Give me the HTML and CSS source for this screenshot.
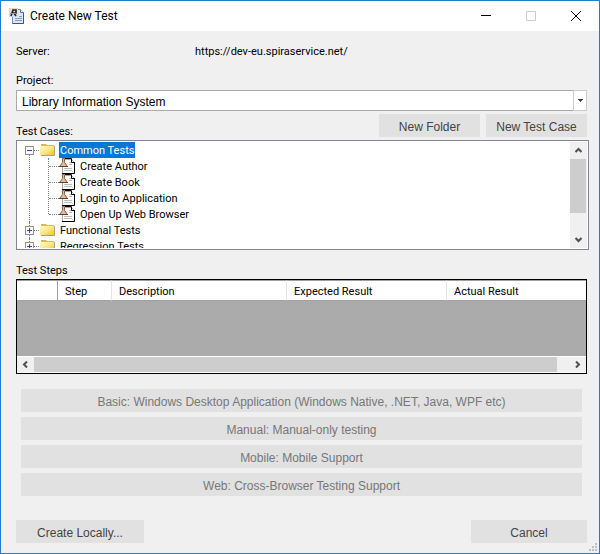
FILE: index.html
```html
<!DOCTYPE html>
<html lang="en">
<head>
<meta charset="utf-8">
<title>Create New Test</title>
<link rel="stylesheet" href="styles.css">
</head>
<body>
<svg class="defs" aria-hidden="true">
  <defs>
    <linearGradient id="gold" x1="0" y1="0" x2="1" y2="1">
      <stop offset="0" stop-color="#fffbd0"/><stop offset=".5" stop-color="#fde88a"/><stop offset="1" stop-color="#eec234"/>
    </linearGradient>
    <symbol id="folder" viewBox="0 0 16 14">
      <path d="M1 1h5l1 1h7v2H1z" fill="#d9b95c"/>
      <path d="M0 3h14v9H0z" fill="url(#gold)"/>
      <path d="M14.500 3v9.500H1" fill="none" stroke="#a8a08a"/>
    </symbol>
    <symbol id="testcase" viewBox="0 0 17 16">
      <path d="M3.500 1.500h9l3 3v11h-12z" fill="#fff" stroke="#aaa"/>
      <path d="M6 .5h6.500v4h3.500M15.500 4v11.500H3" fill="none" stroke="#000"/>
      <path d="M10 4.500h2M10 6.500h3M5 10.500h8M5 12.500h8" stroke="#bbb"/>
      <path d="M3.500.5v4L.5 8.500h8l-3-4v-4z" fill="#f0b890" stroke="#84604f"/>
      <path d="M0 8.500h9" stroke="#5a4038"/>
    </symbol>
  </defs>
</svg>
<div class="window">
  <header class="titlebar">
    <svg class="app-icon" viewBox="0 0 16 16" aria-hidden="true">
      <path d="M3.500 1.500h8l3 3v11h-11z" fill="#dbe6fa" stroke="#6f8abc"/>
      <path d="M14.500 4.500v11h-11" fill="none" stroke="#3d5484"/>
      <path d="M11.500 1.500v3h3" fill="#fff" stroke="#5572a8"/>
      <path d="M6 10.500h7M6 12.500h7M10 8.500h3" stroke="#7f9bd0"/>
      <path d="M0 0h9v9H0z" fill="#dcdcdc"/>
      <path d="M2 8l2-6h3v3H3M5 5l2 3" fill="none" stroke="#222" stroke-width="1.600"/>
      <path d="M1 5.500h6" stroke="#f07820"/>
    </svg>
    <h1>Create New Test</h1>
    <div class="window-buttons">
      <button aria-label="Minimize"><svg viewBox="0 0 10 10"><path d="M0 4.500h10" stroke="#000"/></svg></button>
      <button aria-label="Maximize" disabled><svg viewBox="0 0 10 10"><path d="M.5.5h9v9h-9z" stroke="#ccc"/></svg></button>
      <button aria-label="Close"><svg viewBox="0 0 10 10"><path d="M0 0l10 10M10 0L0 10" stroke="#000"/></svg></button>
    </div>
  </header>
  <main>
    <div class="server"><span>Server:</span><span>https://dev-eu.spiraservice.net/</span></div>
    <label class="project-label" for="project">Project:</label>
    <div class="combo">
      <select id="project"><option>Library Information System</option></select>
      <span class="combo-arrow"><svg viewBox="0 0 5 3"><path d="M0 0h5v1H4v1H3v1H2V2H1V1H0z"/></svg></span>
    </div>
    <div class="cases-head">
      <h2>Test Cases:</h2>
      <button class="btn">New Folder</button>
      <button class="btn">New Test Case</button>
    </div>
    <div class="tree">
      <ul class="tree-list">
        <li class="branch open">
          <div class="row"><button class="toggle" aria-label="Collapse"><svg viewBox="0 0 9 9"><path d="M2 4.500h5"/></svg></button><svg class="folder"><use href="#folder"/></svg><span class="name selected">Common Tests</span></div>
          <ul class="leaves">
            <li class="row"><svg class="case"><use href="#testcase"/></svg><span class="name">Create Author</span></li>
            <li class="row"><svg class="case"><use href="#testcase"/></svg><span class="name">Create Book</span></li>
            <li class="row"><svg class="case"><use href="#testcase"/></svg><span class="name">Login to Application</span></li>
            <li class="row"><svg class="case"><use href="#testcase"/></svg><span class="name">Open Up Web Browser</span></li>
          </ul>
        </li>
        <li class="branch"><div class="row"><button class="toggle" aria-label="Expand"><svg viewBox="0 0 9 9"><path d="M2 4.500h5M4.500 2v5"/></svg></button><svg class="folder"><use href="#folder"/></svg><span class="name">Functional Tests</span></div></li>
        <li class="branch"><div class="row"><button class="toggle" aria-label="Expand"><svg viewBox="0 0 9 9"><path d="M2 4.500h5M4.500 2v5"/></svg></button><svg class="folder"><use href="#folder"/></svg><span class="name">Regression Tests</span></div></li>
      </ul>
      <div class="vscroll">
        <button aria-label="Scroll up"><svg viewBox="0 0 7 7"><path d="M.5 5l3-3 3 3"/></svg></button>
        <div class="thumb"></div>
        <button aria-label="Scroll down"><svg viewBox="0 0 7 7"><path d="M.5 2l3 3 3-3"/></svg></button>
      </div>
    </div>
    <h2 class="steps-label">Test Steps</h2>
    <div class="grid">
      <table>
        <thead><tr><th class="c-mark"></th><th class="c-step">Step</th><th class="c-desc">Description</th><th class="c-exp">Expected Result</th><th>Actual Result</th></tr></thead>
      </table>
      <div class="hscroll">
        <button aria-label="Scroll left"><svg viewBox="0 0 7 7"><path d="M5 .5l-3 3 3 3"/></svg></button>
        <div class="thumb"></div>
        <button aria-label="Scroll right"><svg viewBox="0 0 7 7"><path d="M2 .5l3 3-3 3"/></svg></button>
      </div>
    </div>
    <div class="kinds">
      <button class="btn" disabled>Basic: Windows Desktop Application (Windows Native, .NET, Java, WPF etc)</button>
      <button class="btn" disabled>Manual: Manual-only testing</button>
      <button class="btn" disabled>Mobile: Mobile Support</button>
      <button class="btn" disabled>Web: Cross-Browser Testing Support</button>
    </div>
    <footer>
      <button class="btn create">Create Locally...</button>
      <button class="btn cancel">Cancel</button>
    </footer>
  </main>
  <svg class="grip" viewBox="0 0 8 8" aria-hidden="true"><path d="M6 0h2v2H6zM3 3h2v2H3zM6 3h2v2H6zM0 6h2v2H0zM3 6h2v2H3zM6 6h2v2H6z"/></svg>
</div>
</body>
</html>
```
FILE: styles.css
```css
* { box-sizing: border-box; }
body { margin: 0; font: 11px/16px Roboto, "Liberation Sans", sans-serif; color: #000; }
h1, h2, ul { margin: 0; padding: 0; font: inherit; list-style: none; }
button { margin: 0; padding: 0; border: 0; background: none; font: inherit; color: inherit; }
svg { display: block; flex: none; }
.defs { position: absolute; width: 0; height: 0; }

.window { position: relative; min-height: 100vh; border: 1px solid #1a7fd4; background: #f0f0f0; }
.titlebar { display: flex; align-items: center; height: 30px; padding-left: 8px; background: #fff; }
.app-icon { width: 16px; height: 16px; }
.titlebar h1 { flex: 1; padding-left: 5px; font: 12px/16px Roboto, sans-serif; }
.window-buttons { display: flex; padding-right: 1px; }
.window-buttons button { display: grid; place-items: center; width: 45px; height: 28px; }
.window-buttons svg { width: 10px; height: 10px; fill: none; }

main { padding: 13px 12px 10px 15px; }
.server { display: grid; grid-template-columns: 179px 1fr; }
.project-label { display: block; margin-top: 13px; }
.combo { position: relative; margin: 1px 0 3px; }
.combo select { display: block; width: 100%; height: 21px; padding: 2px 5px 0; border: 1px solid #aaa; border-radius: 0; background: #fff; appearance: none; color: #000; font: 12px/16px "Liberation Sans", sans-serif; }
.combo-arrow { position: absolute; top: 0; right: 0; bottom: 0; display: grid; place-items: center; width: 14px; border: 1px solid #ccc; pointer-events: none; }
.combo-arrow svg { width: 5px; height: 3px; fill: #444; }
.cases-head { display: flex; align-items: flex-start; gap: 6px; height: 26px; }
.cases-head h2 { flex: 1; align-self: flex-end; }
.btn { height: 23px; padding-top: 2px; background: #e1e1e1; color: #444; font: 12px/16px "Liberation Sans", sans-serif; text-align: center; }
.btn:disabled { color: #777; }
.cases-head .btn { width: 101px; }

.tree { display: flex; height: 110px; margin-right: -2px; padding: 1px; border: 1px solid #828790; background: #fff; }
.tree-list { flex: 1; height: 106px; padding-left: 7px; overflow: hidden; }
.row { display: flex; align-items: center; height: 16px; }
.branch { position: relative; }
.branch::before { content: ""; position: absolute; top: 0; bottom: 0; left: 4px; border-left: 1px dotted #808080; }
.branch:first-child::before { top: 8px; }
.toggle { position: relative; width: 9px; height: 9px; margin-right: 6px; border: 1px solid #919191; background: #f8f8f8; }
.toggle svg { width: 9px; height: 9px; margin: -1px; fill: none; stroke: #2b4b9b; }
.toggle::after { content: ""; position: absolute; top: 3px; left: 8px; width: 5px; border-top: 1px dotted #808080; }
.folder { width: 16px; height: 14px; }
.name { height: 16px; padding: 2px 1px 0; line-height: 14px; }
.row .name { margin-left: 3px; }
.name.selected { background: #0078d7; color: #fff; }
.leaves { position: relative; padding-left: 24px; }
.leaves::before { content: ""; position: absolute; top: 0; bottom: 8px; left: 23px; border-left: 1px dotted #808080; }
.leaves .row::before { content: ""; width: 10px; border-top: 1px dotted #808080; }
.case { width: 17px; height: 16px; }
.vscroll { display: flex; flex-direction: column; width: 17px; background: #f0f0f0; }
.vscroll button { display: grid; place-items: center; height: 17px; }
.vscroll .thumb { height: 54px; margin: 0 1px 0 0; background: #cdcdcd; }
.vscroll button:last-child { margin-top: auto; }
.vscroll svg, .hscroll svg { width: 7px; height: 7px; fill: none; stroke: #505050; stroke-width: 2; }

.steps-label { margin-top: 13px; }
.grid { display: flex; flex-direction: column; justify-content: space-between; height: 95px; border: 1px solid #000; background: #ababab; }
.grid table { width: 100%; border-collapse: separate; border-spacing: 0; table-layout: fixed; }
.grid th { height: 21px; padding: 2px 7px 0; border-top: 1px solid #a0a0a0; border-bottom: 1px solid #a0a0a0; border-right: 1px solid #e5e5e5; background: #fff; font-weight: normal; text-align: left; }
.grid th:last-child { border-right: 0; }
.grid .c-mark { width: 41px; border-right-color: #a0a0a0; }
.c-step { width: 54px; }
.c-desc { width: 175px; }
.c-exp { width: 160px; }
.hscroll { display: flex; height: 17px; border-top: 1px solid #fff; border-bottom: 1px solid #fff; background: #f0f0f0; }
.hscroll button { display: grid; place-items: center; width: 17px; }
.hscroll .thumb { width: 523px; margin-right: auto; background: #cdcdcd; }

.kinds { display: grid; gap: 5px; margin: 15px 5px 0; }
footer { display: flex; justify-content: space-between; margin-top: 24px; }
.create { width: 128px; }
.cancel { width: 116px; }
.grip { position: absolute; right: 2px; bottom: 2px; width: 8px; height: 8px; fill: #bfbfbf; }
```
